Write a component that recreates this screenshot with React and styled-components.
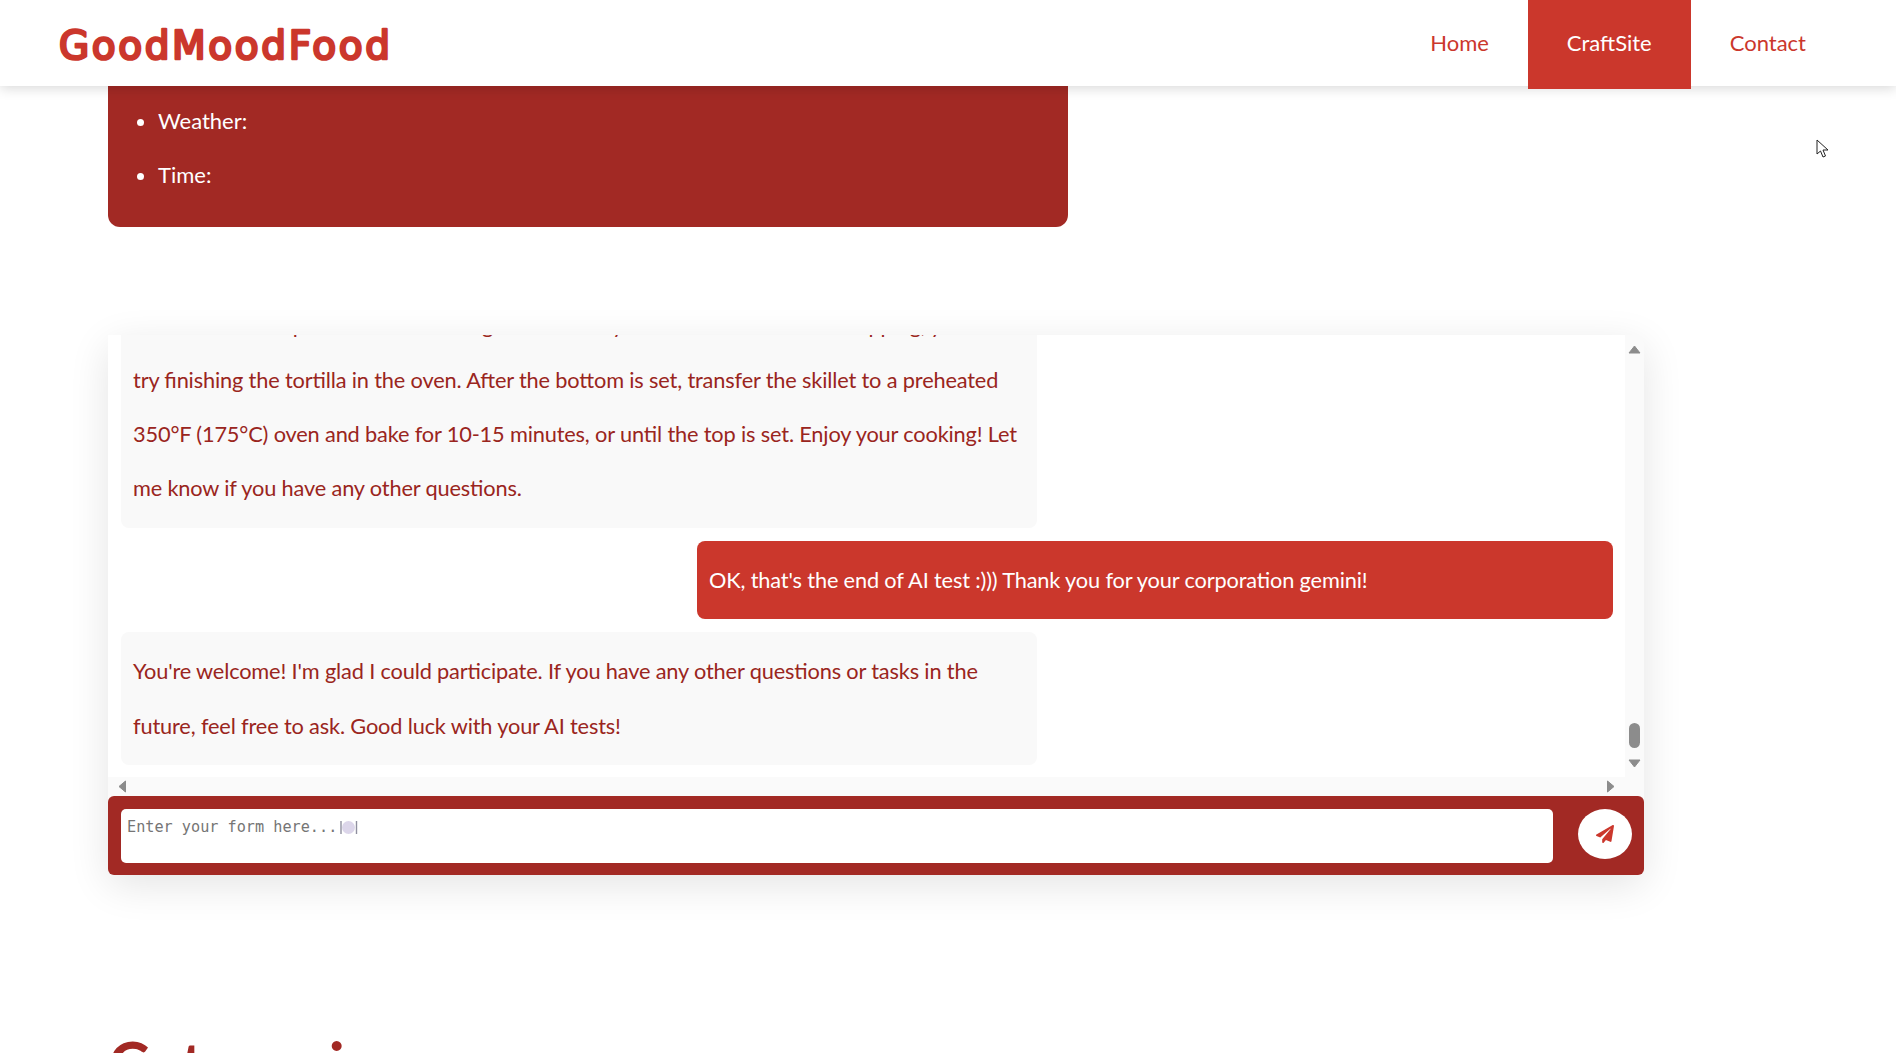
import React from 'react';
import styled, { createGlobalStyle } from 'styled-components';
import { FaPaperPlane } from 'react-icons/fa';

const RED = '#cb372c';
const DARK = '#a22924';

const GlobalStyle = createGlobalStyle`
  html, body {
    margin: 0;
    height: 100%;
    overflow: hidden;
    background: #fff;
  }
  body {
    font-family: Lato, "Noto Sans", sans-serif;
  }
`;

const Header = styled.header`
  position: relative;
  z-index: 2;
  height: 86px;
  display: flex;
  align-items: flex-start;
  justify-content: space-between;
  padding-left: 58px;
  padding-right: 51px;
  background: #fff;
  box-shadow: 0 2px 12px rgba(0, 0, 0, 0.16);
`;

const Logo = styled.svg`
  display: block;
  width: 340px;
  height: 86px;
  overflow: visible;
`;

const LogoText = styled.text`
  font-family: "DejaVu Sans", sans-serif;
  font-size: 39px;
  fill: ${RED};
  stroke: ${RED};
  stroke-width: 2.6px;
  stroke-linejoin: round;
  stroke-linecap: round;
`;

const Nav = styled.nav`
  display: flex;
`;

const NavItem = styled.a`
  height: 89px;
  box-sizing: border-box;
  padding: 0 39px 4px;
  display: flex;
  align-items: center;
  font-size: 22px;
  color: ${p => (p.$active ? '#fff' : RED)};
  background: ${p => (p.$active ? RED : 'transparent')};
`;

const Main = styled.main`
  padding-left: 108px;
  width: 1536px;
`;

const WeatherPanel = styled.ul`
  width: 960px;
  box-sizing: border-box;
  height: 141px;
  margin: 0;
  padding: 8px 0 0 50px;
  background: ${DARK};
  border-radius: 0 0 12px 12px;
  color: #fff;
  font-size: 22px;
  line-height: 54.4px;
`;

const Chat = styled.section`
  margin-top: 108px;
  height: 540px;
  display: flex;
  flex-direction: column;
  border-radius: 10px;
  background: #fafafa;
  box-shadow: 0 10px 40px rgba(0, 0, 0, 0.11);
`;

const ChatBody = styled.div`
  display: grid;
  grid-template-columns: 1fr 19px;
  grid-template-rows: 1fr 19px;
  height: 461px;
`;

const Messages = styled.div`
  display: flex;
  flex-direction: column;
  justify-content: flex-end;
  gap: 13px;
  padding: 0 12px 12px 13px;
  overflow: hidden;
  background: #fff;
`;

const Bubble = styled.div`
  flex: none;
  box-sizing: border-box;
  width: 916px;
  padding: 12px;
  border-radius: 8px;
  font-size: 21.76px;
  line-height: 54.4px;
  letter-spacing: -0.155px;
  font-feature-settings: "liga" 1;
  align-self: ${p => (p.$mine ? 'flex-end' : 'flex-start')};
  background: ${p => (p.$mine ? RED : '#f9f9f9')};
  color: ${p => (p.$mine ? '#fff' : '#9a2520')};
`;

const VerticalRail = styled.div`
  display: flex;
  flex-direction: column;
  align-items: center;
  padding: 8px 0 7px;
  box-sizing: border-box;
`;

const Thumb = styled.div`
  width: 11px;
  height: 25px;
  margin-top: auto;
  margin-bottom: 9px;
  border-radius: 6px;
  background: #8c8c8c;
`;

const HorizontalRail = styled.div`
  display: flex;
  align-items: center;
  justify-content: space-between;
  padding: 0 8px;
`;

const Arrow = styled.svg`
  display: block;
  fill: #8c8c8c;
  stroke: #8c8c8c;
  stroke-width: 1;
  stroke-linejoin: round;
  width: 13px;
  height: 13px;
`;

const InputBar = styled.form`
  flex: 1;
  display: flex;
  align-items: flex-start;
  padding: 13px 12px 0 13px;
  gap: 25px;
  background: ${DARK};
  border-radius: 6px;
`;

const InputWrap = styled.div`
  flex: 1;
  position: relative;
  height: 54px;
`;

const Input = styled.textarea`
  display: block;
  width: 100%;
  height: 54px;
  box-sizing: border-box;
  padding: 9px 6px;
  border: 0;
  border-radius: 5px;
  resize: none;
  outline: none;
  background: #fff;
  font-family: "DejaVu Sans Mono", monospace;
  font-size: 15.2px;
  &::placeholder {
    color: #757575;
  }
`;

const PlateIcon = styled.svg`
  position: absolute;
  left: 218px;
  top: 11px;
  width: 19px;
  height: 15px;
  pointer-events: none;
`;

const SendButton = styled.button`
  width: 54px;
  height: 50px;
  border: 0;
  padding: 0;
  border-radius: 50%;
  background: #fff;
  color: ${RED};
  display: flex;
  align-items: center;
  justify-content: center;
  font-size: 18px;
`;

const Heading = styled.h2`
  margin: 151px 0 0;
  font-size: 62.5px;
  font-weight: 700;
  line-height: 1.2;
  color: ${DARK};
`;

const Cursor = styled.svg`
  position: fixed;
  left: 1816px;
  top: 139px;
  width: 14px;
  height: 20px;
`;

const ArrowIcon = ({ dir }) => {
  const points = {
    up: '1,10 12,10 6.5,3',
    down: '1,3 12,3 6.5,10',
    left: '9.5,1 9.5,12 3,6.5',
    right: '3.5,1 3.5,12 10,6.5',
  };
  return (
    <Arrow viewBox="0 0 13 13">
      <polygon points={points[dir]} />
    </Arrow>
  );
};

export default function App() {
  return (
    <>
      <GlobalStyle />
      <Header>
        <Logo viewBox="0 0 340 86">
          <LogoText x="1" y="59" textLength="331" lengthAdjust="spacing">GoodMoodFood</LogoText>
        </Logo>
        <Nav>
          <NavItem>Home</NavItem>
          <NavItem $active>CraftSite</NavItem>
          <NavItem>Contact</NavItem>
        </Nav>
      </Header>
      <Main>
        <WeatherPanel>
          <li>Weather:</li>
          <li>Time:</li>
        </WeatherPanel>
        <Chat>
          <ChatBody>
            <Messages>
              <Bubble>
                Also when the top is still not browning all of the way without the bottom so flopping, you can<br />
                try finishing the tortilla in the oven. After the bottom is set, transfer the skillet to a preheated
                350°F (175°C) oven and bake for 10-15 minutes, or until the top is set. Enjoy your cooking! Let
                me know if you have any other questions.
              </Bubble>
              <Bubble $mine>OK, that's the end of AI test :))) Thank you for your corporation gemini!</Bubble>
              <Bubble>
                You're welcome! I'm glad I could participate. If you have any other questions or tasks in the
                future, feel free to ask. Good luck with your AI tests!
              </Bubble>
            </Messages>
            <VerticalRail>
              <ArrowIcon dir="up" />
              <Thumb />
              <ArrowIcon dir="down" />
            </VerticalRail>
            <HorizontalRail>
              <ArrowIcon dir="left" />
              <ArrowIcon dir="right" />
            </HorizontalRail>
          </ChatBody>
          <InputBar onSubmit={e => e.preventDefault()}>
            <InputWrap>
              <Input placeholder="Enter your form here..." />
              <PlateIcon viewBox="0 0 19 15">
                <circle cx="9.5" cy="7.5" r="6.5" fill="#dcd6ea" />
                <path d="M2 1v13M17.5 1v13" stroke="#8f8f9f" strokeWidth="1.4" fill="none" />
              </PlateIcon>
            </InputWrap>
            <SendButton type="submit"><FaPaperPlane /></SendButton>
          </InputBar>
        </Chat>
        <Heading>Categories</Heading>
      </Main>
      <Cursor viewBox="0 0 14 20">
        <path d="M1 1 L1 15 L4.5 12 L7 18 L9.5 17 L7 11 L12 11 Z" fill="#fff" stroke="#222" strokeWidth="1" />
      </Cursor>
    </>
  );
}
